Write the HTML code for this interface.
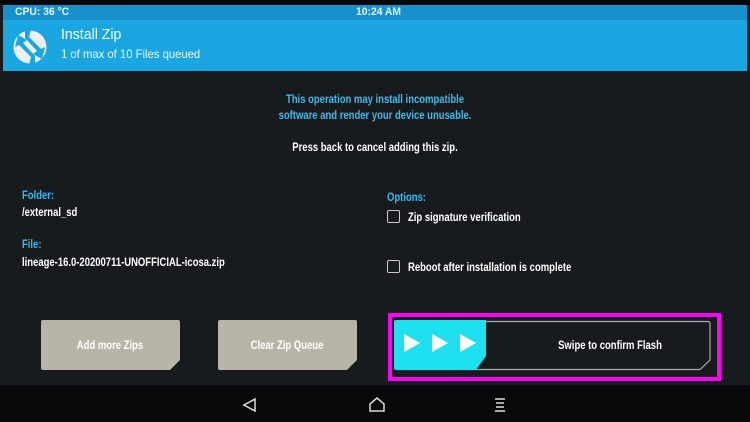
<!DOCTYPE html>
<html><head><style>
*{margin:0;padding:0;box-sizing:border-box}
body{width:750px;height:422px;overflow:hidden;background:#181b1e;font-family:"Liberation Sans",sans-serif;color:#fff;position:relative}
.a{position:absolute;white-space:nowrap}
.n{transform:scaleX(.79);transform-origin:0 50%;font-size:12px}
.c{transform:scaleX(.79);transform-origin:50% 50%;font-size:12px}
.h{transform:scaleX(.94);transform-origin:0 50%}
.b{font-weight:bold}
.blue{color:#3ab8f0}
.chk{position:absolute;width:13px;height:13px;border:1.5px solid #ccc;border-radius:2px}
</style></head><body>
<div class="a" style="left:0;top:0;width:750px;height:5px;background:#050608"></div>
<div class="a" style="left:3px;top:5px;width:744px;height:66px;background:#1aa6e0"></div>
<div class="a" style="left:3px;top:5px;width:744px;height:15px;background:#1691cc"></div>
<div class="a b h" style="left:15px;top:6px;font-size:11px;color:#e8f6ff">CPU: 36 °C</div>
<div class="a b h" style="left:356px;top:6px;font-size:11px;color:#e8f6ff">10:24 AM</div>
<svg class="a" style="left:12px;top:29px" width="36" height="36" viewBox="0 0 36 36">
<circle cx="18" cy="18" r="16.5" fill="#eeeeee"/>
<path d="M13 0 L13 9 L25 22 L21 25 L30 30 L33 18 L29 20 L17 8 L19 0 Z" fill="#1aa6e0"/>
<path d="M23 36 L23 27 L11 14 L15 11 L6 6 L3 18 L7 16 L19 28 L17 36 Z" fill="#1aa6e0"/>
</svg>
<div class="a h" style="left:61px;top:26px;font-size:15px;color:#fff">Install Zip</div>
<div class="a h" style="left:61px;top:47px;font-size:12px;color:#f0f8ff">1 of max of 10 Files queued</div>
<div class="a blue b c" style="left:0;width:750px;text-align:center;top:91px;line-height:16px;color:#42b8e8">This operation may install incompatible<br>software and render your device unusable.</div>
<div class="a b c" style="left:0;width:750px;text-align:center;top:140px">Press back to cancel adding this zip.</div>
<div class="a blue b n" style="left:22px;top:188px">Folder:</div>
<div class="a b n" style="left:22px;top:205px">/external_sd</div>
<div class="a blue b n" style="left:22px;top:237px">File:</div>
<div class="a b n" style="left:22px;top:255px">lineage-16.0-20200711-UNOFFICIAL-icosa.zip</div>
<div class="a blue b n" style="left:387px;top:190px">Options:</div>
<div class="chk" style="left:387px;top:210px"></div>
<div class="a b n" style="left:408px;top:210px">Zip signature verification</div>
<div class="chk" style="left:387px;top:260px"></div>
<div class="a b n" style="left:408px;top:260px">Reboot after installation is complete</div>
<svg class="a" style="left:40px;top:320px" width="142" height="51"><path d="M3 0H138a2 2 0 0 1 2 2V40L130 50H3a2 2 0 0 1-2-2V2a2 2 0 0 1 2-2Z" fill="#b8b5a8"/></svg>
<div class="a b c" style="left:40px;width:140px;text-align:center;top:338px">Add more Zips</div>
<svg class="a" style="left:217px;top:320px" width="142" height="51"><path d="M3 0H138a2 2 0 0 1 2 2V40L130 50H3a2 2 0 0 1-2-2V2a2 2 0 0 1 2-2Z" fill="#b8b5a8"/></svg>
<div class="a b c" style="left:217px;width:140px;text-align:center;top:338px">Clear Zip Queue</div>
<div class="a" style="left:388px;top:313px;width:333px;height:68px;border:4px solid #ff00ff"></div>
<svg class="a" style="left:394px;top:320px" width="320" height="52">
<path d="M2 1.5H314a2 2 0 0 1 2 2V40L306 49.5H2" fill="none" stroke="#aaa" stroke-width="1.2"/>
<path d="M0 2a2 2 0 0 1 2-2H92V36L82 50H2a2 2 0 0 1-2-2Z" fill="#1ee0ee"/>
<path d="M10 14L26 23L10 32Z M38 14L54 23L38 32Z M66 14L82 23L66 32Z" fill="#fff"/>
</svg>
<div class="a b c" style="left:510px;width:200px;text-align:center;top:338px">Swipe to confirm Flash</div>
<div class="a" style="left:0;top:385px;width:750px;height:37px;background:#08090b"></div>
<svg class="a" style="left:240px;top:396px" width="280" height="18" fill="none" stroke="#ddd" stroke-width="1.5">
<path d="M15 3L4 9L15 15Z"/>
<path d="M130 8L137 2L144 8V15H130Z"/>
<path d="M255 3H265M256 7H264M256 11H264M255 15H265"/>
</svg>
</body></html>
